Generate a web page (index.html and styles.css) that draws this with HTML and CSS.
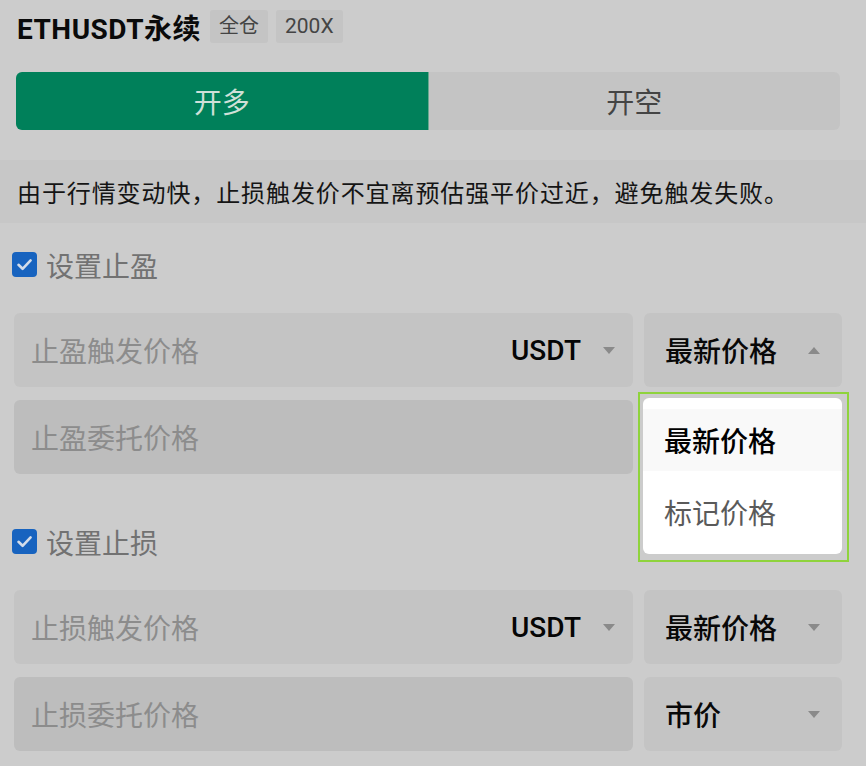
FILE: index.html
```html
<!DOCTYPE html>
<html lang="zh-CN">
<head>
<meta charset="utf-8">
<title>ETHUSDT永续</title>
<link rel="stylesheet" href="styles.css">
</head>
<body>
<div class="page">
  <div class="header">
    <span class="title">ETHUSDT永续</span>
    <span class="tag">全仓</span>
    <span class="tag tag-num">200X</span>
  </div>

  <div class="tabs">
    <div class="tab tab-long">开多</div>
    <div class="tab tab-short">开空</div>
  </div>

  <div class="notice">由于行情变动快，止损触发价不宜离预估强平价过近，避免触发失败。</div>

  <label class="check check-first">
    <svg class="box" width="25" height="25" viewBox="0 0 25 25"><rect x="0" y="0" width="25" height="25" rx="4" fill="#1763bf"/><path d="M6.5 12.8 L10.6 16.8 L18.6 8.4" fill="none" stroke="#d2dcea" stroke-width="2.6" stroke-linecap="round" stroke-linejoin="round"/></svg>
    <span class="check-label">设置止盈</span>
  </label>

  <div class="row row-first">
    <div class="field">
      <span class="placeholder">止盈触发价格</span>
      <span class="unit">USDT</span>
      <span class="caret down"></span>
    </div>
    <div class="select-wrap">
      <div class="select">
        <span class="select-text">最新价格</span>
        <span class="caret up"></span>
      </div>
      <div class="dropdown">
        <div class="menu">
          <div class="menu-item selected">最新价格</div>
          <div class="menu-item last">标记价格</div>
        </div>
      </div>
    </div>
  </div>

  <div class="row row-second">
    <div class="field disabled">
      <span class="placeholder">止盈委托价格</span>
    </div>
  </div>

  <label class="check check-second">
    <svg class="box" width="25" height="25" viewBox="0 0 25 25"><rect x="0" y="0" width="25" height="25" rx="4" fill="#1763bf"/><path d="M6.5 12.8 L10.6 16.8 L18.6 8.4" fill="none" stroke="#d2dcea" stroke-width="2.6" stroke-linecap="round" stroke-linejoin="round"/></svg>
    <span class="check-label">设置止损</span>
  </label>

  <div class="row row-first">
    <div class="field">
      <span class="placeholder">止损触发价格</span>
      <span class="unit">USDT</span>
      <span class="caret down"></span>
    </div>
    <div class="select-wrap">
      <div class="select">
        <span class="select-text">最新价格</span>
        <span class="caret down"></span>
      </div>
    </div>
  </div>

  <div class="row row-second">
    <div class="field disabled">
      <span class="placeholder">止损委托价格</span>
    </div>
    <div class="select-wrap">
      <div class="select">
        <span class="select-text">市价</span>
        <span class="caret down"></span>
      </div>
    </div>
  </div>
</div>
</body>
</html>
```

FILE: styles.css
```css
* { box-sizing: border-box; }

html, body {
  margin: 0;
  padding: 0;
  background: #cccccc;
}

body {
  font-family: Roboto, "Noto Sans CJK SC", sans-serif;
  width: 866px;
  height: 766px;
  overflow: hidden;
}

.page {
  display: flex;
  flex-direction: column;
}

.header {
  display: flex;
  align-items: center;
  height: 33px;
  margin-top: 10px;
  padding-left: 17px;
}

.title {
  font-size: 28px;
  font-weight: 700;
  color: #0a0a0a;
  margin-right: 9px;
  letter-spacing: 0.5px;
}

.tag {
  height: 33px;
  line-height: 33px;
  padding: 0 9px;
  background: #c4c4c4;
  border-radius: 3px;
  font-size: 20px;
  color: #444;
  margin-right: 8px;
}

.tag-num {
  font-size: 21px;
}

.tabs {
  display: flex;
  height: 58px;
  margin: 29px 26px 0 16px;
  border-radius: 6px;
  overflow: hidden;
  background: #c4c4c4;
}

.tab {
  flex: 1;
  display: flex;
  align-items: center;
  justify-content: center;
  font-size: 28px;
}

.tab-long {
  background: #00805a;
  color: #cfe0d8;
  border-right: 1px solid #6aa88f;
}

.tab-short {
  color: #444;
}

.notice {
  margin-top: 30px;
  height: 63px;
  display: flex;
  align-items: center;
  padding-left: 17px;
  background: #c7c7c7;
  font-size: 24px;
  letter-spacing: 0.9px;
  color: #151515;
}

.check {
  display: flex;
  align-items: center;
  height: 25px;
  padding-left: 12px;
}

.check-first { margin-top: 29px; }
.check-second { margin-top: 55px; }

.box { flex: none; }

.check-label {
  margin-left: 9px;
  font-size: 28px;
  color: #727272;
}

.row {
  display: flex;
  gap: 11px;
  height: 74px;
  margin: 0 23px 0 14px;
}

.row-first { margin-top: 36px; }
.row-second { margin-top: 13px; }

.field {
  width: 619px;
  flex: none;
  display: flex;
  align-items: center;
  padding: 0 18px 0 17px;
  background: #c4c4c4;
  border-radius: 6px;
}

.field.disabled {
  background: #bdbdbd;
}

.placeholder {
  flex: 1;
  font-size: 28px;
  color: #8c8c8c;
}

.unit {
  font-size: 28px;
  font-weight: 500;
  color: #050505;
  margin-right: 22px;
}

.caret {
  width: 0;
  height: 0;
  border-left: 6px solid transparent;
  border-right: 6px solid transparent;
}

.caret.down { border-top: 7px solid #8a8a8a; }
.caret.up { border-bottom: 7px solid #8a8a8a; }

.select-wrap {
  position: relative;
  width: 198px;
  flex: none;
}

.select {
  height: 74px;
  display: flex;
  align-items: center;
  justify-content: space-between;
  padding: 0 22px 0 21px;
  background: #c4c4c4;
  border-radius: 6px;
}

.select-text {
  font-size: 28px;
  font-weight: 500;
  color: #080808;
}

.dropdown {
  position: absolute;
  top: 79px;
  left: -6px;
  width: 211px;
  height: 170px;
  border: 2px solid #8fd33c;
  padding: 4px 5px 6px 3px;
  z-index: 5;
}

.menu {
  height: 100%;
  background: #ffffff;
  border-radius: 6px;
  padding-top: 11px;
  overflow: hidden;
}

.menu-item {
  height: 62px;
  display: flex;
  align-items: center;
  padding-left: 21px;
  font-size: 28px;
  color: #5a5a5a;
}

.menu-item.selected {
  background: #f9f9f9;
  color: #000;
  font-weight: 500;
}

.menu-item.last {
  height: 82px;
}
```
